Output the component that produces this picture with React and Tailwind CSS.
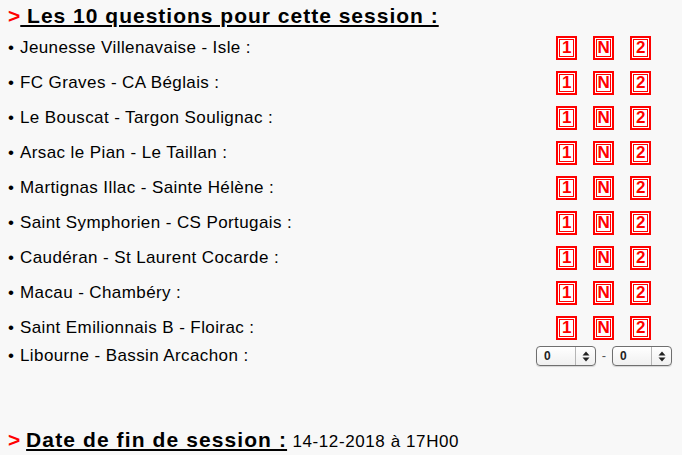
import React from "react";

const matches = [
  "Jeunesse Villenavaise - Isle :",
  "FC Graves - CA Béglais :",
  "Le Bouscat - Targon Soulignac :",
  "Arsac le Pian - Le Taillan :",
  "Martignas Illac - Sainte Hélène :",
  "Saint Symphorien - CS Portugais :",
  "Caudéran - St Laurent Cocarde :",
  "Macau - Chambéry :",
  "Saint Emilionnais B - Floirac :",
];

function Box({ c }) {
  return (
    <div className="w-[21px] h-[24px] border-2 border-[#ff0000] bg-white p-px">
      <div className="w-full h-full border border-[#ff0000] bg-white flex items-center justify-center">
        <span className="text-[#ff0000] font-bold text-[17px] leading-[14px] tracking-[-0.5px]">{c}</span>
      </div>
    </div>
  );
}

function Sel() {
  return (
    <div className="w-[60px] h-[20px] border border-[#6f6f6f] rounded-[4px] bg-gradient-to-b from-white to-[#f0f0f0] flex items-center shadow-[0_1px_1px_rgba(0,0,0,0.15)]">
      <span className="w-[38px] pl-[7px] text-[12px] leading-none font-bold text-[#222]">0</span>
      <div className="h-full w-px bg-[#b5b5b5]" />
      <div className="flex-1 flex items-center justify-center">
        <svg width="8" height="11" viewBox="0 0 8 11">
          <path d="M4 0.5 L7.5 4.5 L0.5 4.5 Z" fill="#222" />
          <path d="M4 10.5 L7.5 6.5 L0.5 6.5 Z" fill="#222" />
        </svg>
      </div>
    </div>
  );
}

export default function App() {
  return (
    <div
      className="w-[682px] h-[455px] bg-[#f8f8f8] px-2 text-black overflow-hidden"
      style={{ fontFamily: '"Liberation Sans", Arial, sans-serif' }}
    >
      <div className="h-[30px] pt-[4px] text-[21px] leading-[24px] font-bold whitespace-pre">
        <span className="text-[#ff0000]">&gt;</span>
        <span className="underline decoration-[1.5px] underline-offset-[2px] tracking-[1px]"> Les 10 questions pour cette session :</span>
      </div>
      {matches.map((m) => (
        <div key={m} className="h-[35px] flex items-center">
          <div className="w-[540px] text-[17px] leading-[18px] tracking-[0.4px]">
            <span className="inline-block w-[12px]">•</span>
            {m}
          </div>
          <div className="flex">
            {["1", "N", "2"].map((c) => (
              <div key={c} className="w-[37px] flex justify-center">
                <Box c={c} />
              </div>
            ))}
          </div>
        </div>
      ))}
      <div className="h-[22px] flex items-center">
        <div className="w-[528px] text-[17px] leading-[18px] tracking-[0.4px]">
          <span className="inline-block w-[12px]">•</span>
          Libourne - Bassin Arcachon :
        </div>
        <Sel />
        <span className="w-[16px] text-center text-[13px] text-[#555]">-</span>
        <Sel />
      </div>
      <div className="mt-[61px] text-[21px] leading-[24px] whitespace-pre">
        <span className="text-[#ff0000] font-bold">&gt; </span>
        <span className="font-bold underline decoration-[1.5px] underline-offset-[2px] tracking-[1.1px]">Date de fin de session :</span>
        <span className="text-[17px] tracking-[0.6px]"> 14-12-2018 à 17H00</span>
      </div>
    </div>
  );
}
